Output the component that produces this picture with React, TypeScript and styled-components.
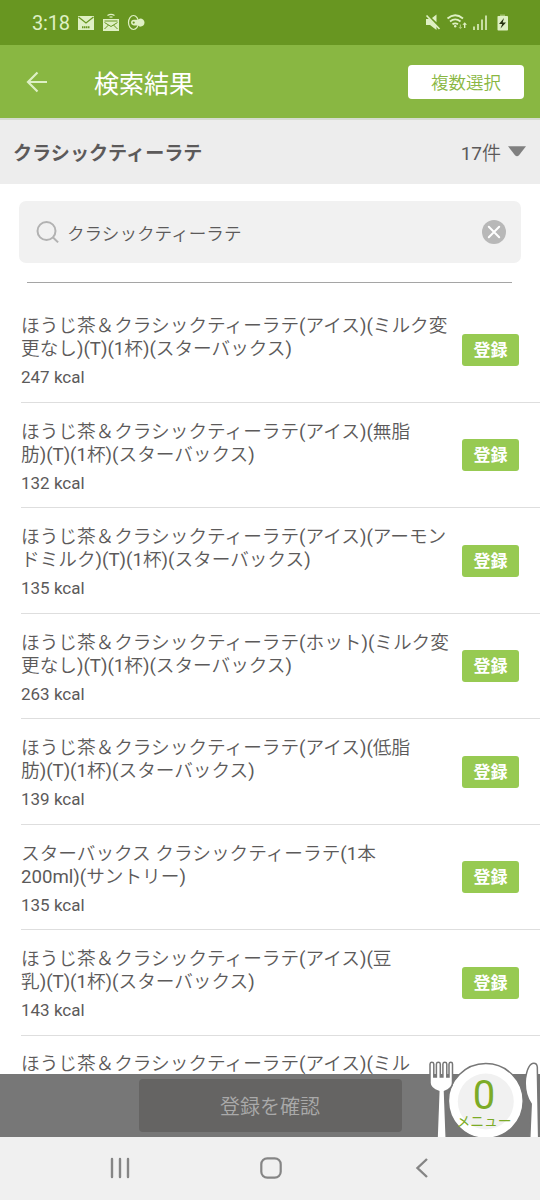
import React from "react";
import styled, { createGlobalStyle } from "styled-components";

const GlobalStyle = createGlobalStyle`
  * { box-sizing: border-box; }
  body { margin: 0; background: #fff; }
  button { border: 0; padding: 0; font-family: inherit; }
  svg { display: block; flex: none; }
`;

const Screen = styled.div`
  position: relative;
  display: flex;
  flex-direction: column;
  width: 540px;
  height: 1200px;
  overflow: hidden;
  background: #fff;
  color: #5c5a5a;
  font-family: Roboto, "Noto Sans CJK JP", sans-serif;
  font-weight: 400;
`;

const lightKana = `Roboto, "Noto Sans CJK JP DemiLight", "Noto Sans CJK JP", sans-serif`;

const StatusBar = styled.div`
  flex: none;
  height: 45px;
  display: flex;
  align-items: center;
  padding: 0 30px 0 32px;
  background: #689621;
  color: #dff0c4;
`;

const Clock = styled.span`
  width: 45px;
  font-size: 20px;
  line-height: 24px;
  letter-spacing: -0.2px;
  padding-top: 1px;
`;

const Header = styled.header`
  flex: none;
  height: 75px;
  display: flex;
  align-items: center;
  padding: 1px 16px 0 26px;
  background: #89b742;
  border-bottom: 2px solid #d5dbcf;
`;

const Title = styled.h1`
  flex: 1;
  margin: 0 0 0 46px;
  padding-top: 5px;
  color: #fff;
  font-size: 25px;
  line-height: 36px;
  font-weight: 400;
`;

const MultiSelect = styled.button`
  width: 116px;
  height: 34px;
  padding-top: 3px;
  border-radius: 4px;
  background: #fff;
  color: #89b742;
  font-size: 17.5px;
  line-height: 31px;
  font-weight: 350;
`;

const Summary = styled.div`
  flex: none;
  height: 64px;
  display: flex;
  align-items: center;
  padding: 0 14px 0 13px;
  background: #ededed;
`;

const Query = styled.strong`
  flex: 1;
  padding-bottom: 1px;
  font-size: 19.1px;
  font-weight: 700;
`;

const Count = styled.span`
  padding-bottom: 2px;
  font-size: 19px;
  font-family: ${lightKana};
  margin-right: 7px;
`;

const SearchField = styled.div`
  flex: none;
  height: 62px;
  margin: 17px 19px 0;
  padding: 0 15px 0 17px;
  display: flex;
  align-items: center;
  border-radius: 7px;
  background: #f1f1f1;
`;

const SearchText = styled.span`
  flex: 1;
  margin-left: 7px;
  font-size: 17.6px;
  font-weight: 350;
`;

const Rule = styled.div`
  flex: none;
  height: 1px;
  margin: 19px 28px 14px 27px;
  background: #a5a5a5;
`;

const List = styled.ul`
  flex: 1;
  min-height: 0;
  overflow: hidden;
  margin: 0;
  padding: 0 0 0 21px;
  list-style: none;
`;

const Row = styled.li`
  height: 105.5px;
  display: flex;
  align-items: center;
  padding-right: 21px;
  border-bottom: 1.5px solid #dedede;
`;

const Food = styled.div`
  flex: 1;
  display: flex;
  flex-direction: column;
  padding-top: 4px;
  white-space: nowrap;
`;

const FoodLine = styled.span`
  height: 23px;
  font-family: ${lightKana};
  font-size: 18.65px;
  line-height: 23px;
`;

const Energy = styled.span`
  margin-top: 6px;
  font-size: 17px;
  line-height: 20px;
`;

const Register = styled.button`
  flex: none;
  width: 57px;
  height: 32px;
  margin-top: 1px;
  padding-top: 1px;
  border-radius: 3px;
  background: #97ca52;
  color: #fff;
  font-size: 17px;
  line-height: 31px;
  font-weight: 700;
`;

const ConfirmBar = styled.div`
  flex: none;
  height: 63px;
  display: flex;
  justify-content: center;
  align-items: center;
  background: #777;
`;

const Confirm = styled.button`
  width: 263px;
  height: 53px;
  padding-top: 4px;
  border-radius: 4px;
  background: #656463;
  color: #aaa;
  font-size: 20px;
  line-height: 49px;
  font-weight: 350;
`;

const MenuBadge = styled.div`
  position: absolute;
  right: 0;
  bottom: 63px;
  width: 112px;
  height: 76px;
`;

const BadgeText = styled.div`
  position: absolute;
  left: 26px;
  top: 18px;
  width: 60px;
  display: flex;
  flex-direction: column;
  align-items: center;
  color: #7cab27;
`;

const BadgeCount = styled.span`
  font-size: 40px;
  line-height: 34px;
`;

const BadgeLabel = styled.span`
  font-size: 13.8px;
  line-height: 14px;
  margin-top: 1px;
  font-weight: 400;
  white-space: nowrap;
`;

const NavBar = styled.nav`
  flex: none;
  height: 63px;
  display: flex;
  align-items: center;
  padding: 0 108px 2px 109px;
  justify-content: space-between;
  background: #f0f0f0;
`;

const foods = [
  ["ほうじ茶＆クラシックティーラテ(アイス)(ミルク変", "更なし)(T)(1杯)(スターバックス)", 247],
  ["ほうじ茶＆クラシックティーラテ(アイス)(無脂", "肪)(T)(1杯)(スターバックス)", 132],
  ["ほうじ茶＆クラシックティーラテ(アイス)(アーモン", "ドミルク)(T)(1杯)(スターバックス)", 135],
  ["ほうじ茶＆クラシックティーラテ(ホット)(ミルク変", "更なし)(T)(1杯)(スターバックス)", 263],
  ["ほうじ茶＆クラシックティーラテ(アイス)(低脂", "肪)(T)(1杯)(スターバックス)", 139],
  ["スターバックス クラシックティーラテ(1本", "200ml)(サントリー)", 135],
  ["ほうじ茶＆クラシックティーラテ(アイス)(豆", "乳)(T)(1杯)(スターバックス)", 143],
] as const;

const ClippedRow = styled.li`
  padding-top: 17px;
  display: flex;
  white-space: nowrap;
`;

function NotificationIcons() {
  return (
    <svg width="70" height="24" viewBox="77 11 70 24" fill="none">
      <rect x="78" y="16" width="16" height="14" fill="#dff0c4" />
      <path d="M78.5 17l7.5 6 7.5-6" stroke="#689621" strokeWidth="1.3" />
      <path d="M82 27.2h8" stroke="#689621" strokeWidth="2" strokeDasharray="1.4 .5" />
      <path d="M107.5 15.5q3.5-2.4 7 0M109.5 17.3q1.5-1 3 0" stroke="#dff0c4" strokeWidth="1.3" />
      <rect x="103" y="19" width="16" height="12" fill="#dff0c4" />
      <path d="M104.5 21h13" stroke="#689621" strokeWidth="1" />
      <path d="M104.5 22.5l6.5 4 6.5-4M104.5 29l4-4M117.5 29l-4-4" stroke="#689621" strokeWidth="1" />
      <ellipse cx="133.5" cy="22.5" rx="5" ry="7" stroke="#dff0c4" strokeWidth="1.2" />
      <path d="M134 19.8h4l2-1.300c2.800 0 4.500 1.700 4.500 4.100s-1.700 4.100-4.500 4.100l-2-1.300h-4c-2 0-3-1.200-3-2.800s1-2.800 3-2.800z" fill="#dff0c4" />
      <circle cx="133.7" cy="22.6" r="1.100" fill="#689621" />
    </svg>
  );
}

function SystemIcons() {
  return (
    <svg width="86" height="24" viewBox="424 11 86 24" fill="none" style={{ marginLeft: "auto" }}>
      <g fill="#dff0c4">
        <path d="M426 19h3.5l7 7v4l-6.5-5h-4z" />
        <path d="M432 18l4.5-3.5v7.8z" />
      </g>
      <path d="M426.5 15.5l13 13.5" stroke="#dff0c4" strokeWidth="1.7" />
      <path d="M447.5 18.5q7.5-6.5 15.5 0M450 21.5q5.2-4.3 10.5 0M452.5 24.3q2.8-2 5.5 0" stroke="#dff0c4" strokeWidth="1.8" />
      <circle cx="455.2" cy="26.3" r="1.2" fill="#dff0c4" />
      <path d="M464 28v-3.2h-1.6l2.3-2.6 2.3 2.6h-1.6V28z" fill="#dff0c4" />
      <path d="M459.8 24.5v2.5h-1.3l1.9 2.2 1.9-2.2h-1.3v-2.5z" fill="#a9c975" />
      <path d="M474 30v-3.5M478 30v-6M482 30V19.5M486 30V15.5" stroke="#dff0c4" strokeWidth="1.6" />
      <rect x="500" y="14.5" width="5" height="2.5" fill="#9fbf6b" />
      <rect x="497.5" y="16" width="10.5" height="14.5" rx=".8" fill="#dff0c4" />
      <path d="M504 18l-5 6h3.2l-1.7 4.5 5.5-6h-3.3z" fill="#26310f" />
    </svg>
  );
}

function Tableware() {
  return (
    <svg width="112" height="76" viewBox="428 1061 112 76">
      <g fill="#fff" stroke="#777" strokeWidth="1.5">
        <circle cx="485.8" cy="1101" r="37.4" />
        <path d="M430 1064q.2-1.7 1.8-1.7 1.9 0 2 1.7v13h2.6v-13q.2-1.7 1.9-1.7 1.9 0 2 1.7v13h2.6v-13q.2-1.7 1.9-1.7 1.9 0 2 1.7v13h2.2v-13q.2-1.7 1.8-1.7 1.7 0 1.7 1.7v19q0 5.500-8 8.500l1.800 48h-9.300l1.800-48q-8.800-3-8.800-8.500z" />
        <path d="M537.3 1067q-.4-3.7-3.5-3.7-5.8 0-8.3 15.2-1.5 15 5.7 25.500l-1.500 35h9z" />
      </g>
      <circle cx="485.8" cy="1101.5" r="28" fill="#f1f1f1" />
    </svg>
  );
}

export default function App() {
  return (
    <Screen>
      <GlobalStyle />
      <StatusBar>
        <Clock>3:18</Clock>
        <NotificationIcons />
        <SystemIcons />
      </StatusBar>
      <Header>
        <svg width="22" height="22" viewBox="0 0 22 22" fill="none" stroke="#def0c5" strokeWidth="2.2">
          <path d="M21 11H2M11.5 1.5L2 11l9.5 9.5" />
        </svg>
        <Title>検索結果</Title>
        <MultiSelect>複数選択</MultiSelect>
      </Header>
      <Summary>
        <Query>クラシックティーラテ</Query>
        <Count>17件</Count>
        <svg width="18" height="13" viewBox="0 0 18 13">
          <path d="M0 .3h18L11 9.3q-2 1.7-4 0z" fill="#808080" />
        </svg>
      </Summary>
      <SearchField>
        <svg width="24" height="24" viewBox="0 0 24 24" fill="none" stroke="#b2b2b2" strokeWidth="2">
          <circle cx="10.5" cy="11" r="9" />
          <path d="M16.8 17.2l5.3 5.2" />
        </svg>
        <SearchText>クラシックティーラテ</SearchText>
        <svg width="24" height="24" viewBox="0 0 24 24">
          <circle cx="12" cy="12" r="12" fill="#b8b8b8" />
          <path d="M6.8 6.8l10.4 10.4M17.2 6.8L6.8 17.2" stroke="#fff" strokeWidth="2" strokeLinecap="round" />
        </svg>
      </SearchField>
      <Rule />
      <List>
        {foods.map(([first, second, kcal], i) => (
          <Row key={i}>
            <Food>
              <FoodLine>{first}</FoodLine>
              <FoodLine>{second}</FoodLine>
              <Energy>{kcal} kcal</Energy>
            </Food>
            <Register>登録</Register>
          </Row>
        ))}
        <ClippedRow>
          <FoodLine>ほうじ茶＆クラシックティーラテ(アイス)(ミル</FoodLine>
        </ClippedRow>
      </List>
      <ConfirmBar>
        <Confirm>登録を確認</Confirm>
      </ConfirmBar>
      <MenuBadge>
        <Tableware />
        <BadgeText>
          <BadgeCount>0</BadgeCount>
          <BadgeLabel>メニュー</BadgeLabel>
        </BadgeText>
      </MenuBadge>
      <NavBar>
        <svg width="22" height="22" viewBox="0 0 22 22" stroke="#858585" strokeWidth="2.4" strokeLinecap="round">
          <path d="M3 2v18M11 2v18M19 2v18" />
        </svg>
        <svg width="22" height="22" viewBox="0 0 22 22" fill="none" stroke="#858585" strokeWidth="2.2">
          <rect x="1.3" y="1.3" width="19.4" height="19.4" rx="6" />
        </svg>
        <svg width="22" height="22" viewBox="0 0 22 22" fill="none" stroke="#858585" strokeWidth="2.4">
          <path d="M17 2L7.5 11l9.5 9" />
        </svg>
      </NavBar>
    </Screen>
  );
}
